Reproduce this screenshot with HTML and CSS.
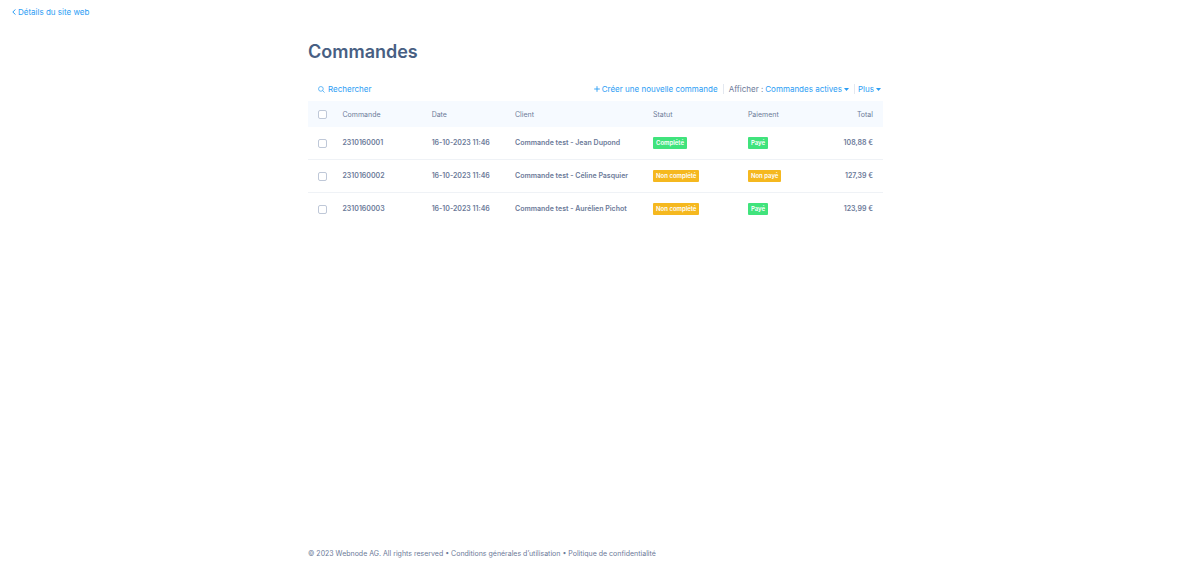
FILE: index.html
```html
<!DOCTYPE html>
<html lang="fr">
<head>
<meta charset="utf-8">
<meta name="viewport" content="width=device-width, initial-scale=1">
<title>Commandes</title>
<link rel="stylesheet" href="styles.css">
</head>
<body>
<header class="topbar">
  <a class="link" href="#"><svg class="icon-back" viewBox="0 0 4 6" aria-hidden="true"><path d="M3.5 .4 .8 3l2.7 2.6"/></svg>Détails du site web</a>
</header>
<main class="content">
  <h1 class="title">Commandes</h1>
  <div class="toolbar">
    <button class="link search" type="button"><svg class="icon-search" viewBox="0 0 8 8" aria-hidden="true"><circle cx="3.3" cy="3.3" r="2.7"/><path d="M5.3 5.3 7.5 7.5"/></svg>Rechercher</button>
    <div class="actions">
      <button class="link create" type="button"><svg class="icon-plus" viewBox="0 0 6 6" aria-hidden="true"><path d="M3 .2v5.6M.2 3h5.6"/></svg>Créer une nouvelle commande</button>
      <div class="filter"><span>Afficher :</span><button class="link" type="button">Commandes actives<svg class="icon-caret" viewBox="0 0 5 3" aria-hidden="true"><path d="M0 0h5L2.5 3z"/></svg></button></div>
      <button class="link more" type="button">Plus<svg class="icon-caret" viewBox="0 0 5 3" aria-hidden="true"><path d="M0 0h5L2.5 3z"/></svg></button>
    </div>
  </div>
  <table class="orders">
    <colgroup><col class="col-check"><col class="col-order"><col class="col-date"><col class="col-client"><col class="col-status"><col class="col-payment"><col></colgroup>
    <thead>
      <tr><th class="check"><input type="checkbox" aria-label="Tout sélectionner"></th><th>Commande</th><th>Date</th><th>Client</th><th>Statut</th><th>Paiement</th><th class="total">Total</th></tr>
    </thead>
    <tbody>
      <tr><td class="check"><input type="checkbox" aria-label="2310160001"></td><td>2310160001</td><td>16-10-2023 11:46</td><td>Commande test - Jean Dupond</td><td><span class="badge green">Complété</span></td><td><span class="badge green">Payé</span></td><td class="total">108,88 €</td></tr>
      <tr><td class="check"><input type="checkbox" aria-label="2310160002"></td><td>2310160002</td><td>16-10-2023 11:46</td><td>Commande test - Céline Pasquier</td><td><span class="badge amber">Non complété</span></td><td><span class="badge amber">Non payé</span></td><td class="total">127,39 €</td></tr>
      <tr><td class="check"><input type="checkbox" aria-label="2310160003"></td><td>2310160003</td><td>16-10-2023 11:46</td><td>Commande test - Aurélien Pichot</td><td><span class="badge amber">Non complété</span></td><td><span class="badge green">Payé</span></td><td class="total">123,99 €</td></tr>
    </tbody>
  </table>
</main>
<footer class="footer">© 2023 Webnode AG. All rights reserved • <a href="#">Conditions générales d’utilisation</a> • <a href="#">Politique de confidentialité</a></footer>
</body>
</html>
```
FILE: styles.css
```css
* { box-sizing: border-box; }

body {
  display: flex;
  flex-direction: column;
  min-height: 100vh;
  margin: 0;
  padding-right: 9px;
  background: #fff;
  color: #6c7a99;
  font: 7px/10px Inter, "Liberation Sans", sans-serif;
}

button {
  padding: 0;
  border: 0;
  background: none;
  font: inherit;
  cursor: pointer;
}

.link {
  display: inline-flex;
  align-items: center;
  color: #2b9df4;
  text-decoration: none;
  white-space: nowrap;
}

.topbar {
  display: flex;
  padding: 7px 12px;
  font-size: 8px;
}

.icon-back, .icon-search, .icon-plus {
  fill: none;
  stroke: currentColor;
}

.icon-back { width: 4px; height: 6px; margin-right: 2px; }
.icon-search { width: 7px; height: 7px; margin-right: 3px; stroke-width: .8; }
.icon-plus { width: 6px; height: 6px; margin-right: 2px; stroke-width: .9; }
.icon-caret { width: 5px; height: 3px; margin-left: 2px; fill: currentColor; }

.content, .footer {
  width: 100%;
  max-width: 575px;
  margin: 0 auto;
}

.content { flex: 1; }

.title {
  margin: 16px 0 20px;
  color: #485f83;
  font-size: 18px;
  line-height: 24px;
  font-weight: 600;
}

.toolbar {
  display: flex;
  align-items: center;
  justify-content: space-between;
  padding: 0 2px 7px 10px;
  font-size: 8px;
}

.actions { display: flex; }

.create { padding-right: 5px; }

.filter {
  display: flex;
  gap: 2px;
  padding: 0 5px;
  border: solid #e3e8f0;
  border-width: 0 1px;
}

.more { padding-left: 3px; }

.orders {
  width: 100%;
  table-layout: fixed;
  border-collapse: separate;
  border-spacing: 0;
}

.col-check { width: 6%; }
.col-order { width: 15.5%; }
.col-date { width: 14.5%; }
.col-client { width: 24%; }
.col-status { width: 16.5%; }
.col-payment { width: 12%; }

.orders th, .orders td {
  padding: 0;
  text-align: left;
  vertical-align: middle;
  white-space: nowrap;
}

.orders th {
  height: 26px;
  padding-top: 2px;
  background: #f6faff;
  font-weight: 400;
}

.orders td {
  height: 33px;
  border-bottom: 1px solid #eff2f6;
  font-weight: 600;
}

.orders tr:last-child td { border-bottom-color: transparent; }

.orders .check { padding: 0 0 0 10px; }
.orders .total { padding-right: 10px; text-align: right; }

.orders input {
  display: block;
  width: 9px;
  height: 9px;
  margin: 0;
  appearance: none;
  border: 1px solid #bfc8d8;
  border-radius: 2px;
  background: #fff;
}

.orders input:checked { background: #2b9df4; }

.badge {
  display: inline-block;
  padding: 0 3px;
  border-radius: 1px;
  color: #fff;
  font-size: 6px;
  line-height: 12px;
  font-weight: 600;
  vertical-align: middle;
}

.green { background: #40e37c; }
.amber { background: #f5b81f; }

.footer { padding-bottom: 8px; }
.footer a { color: inherit; text-decoration: none; }
```
